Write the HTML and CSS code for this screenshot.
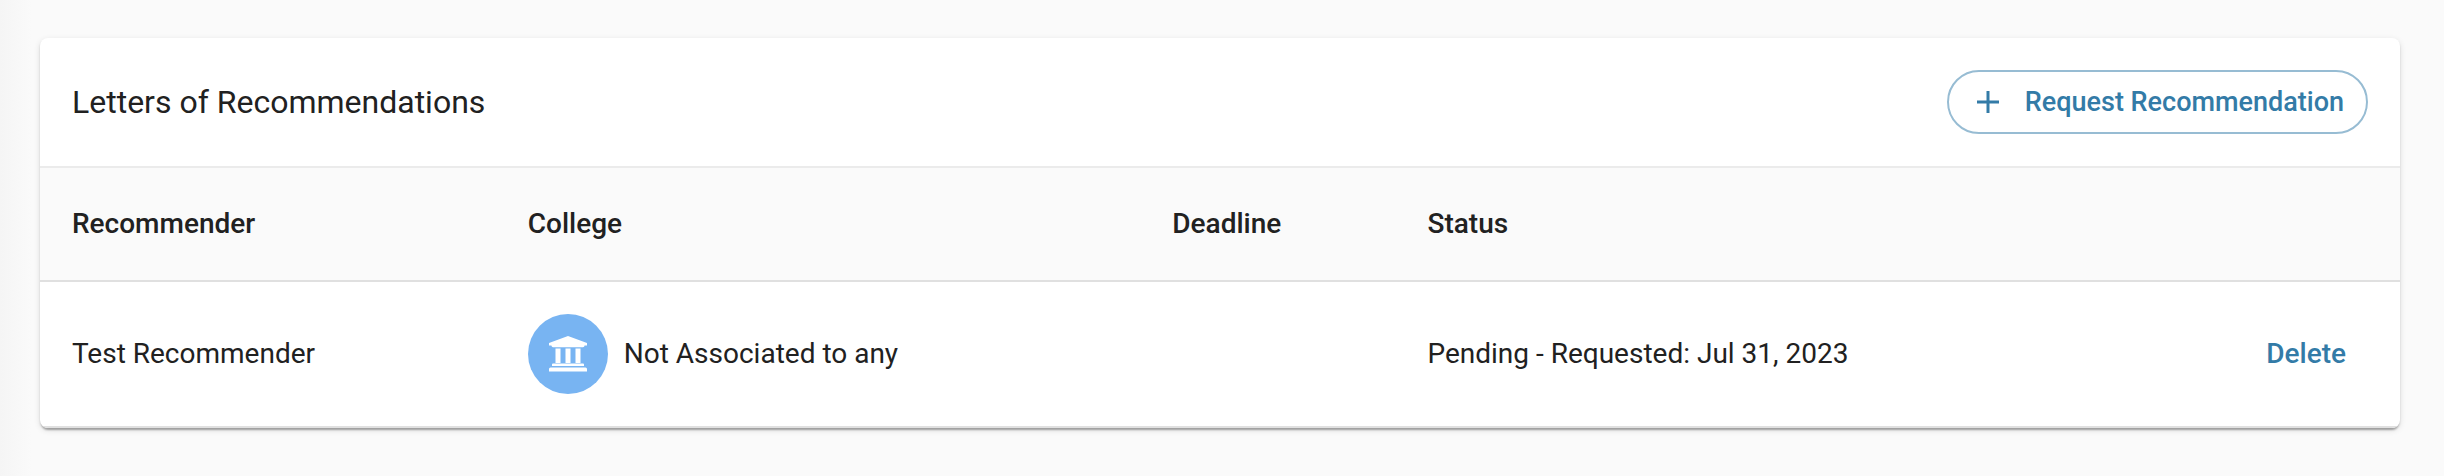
FILE: index.html
```html
<!DOCTYPE html>
<html lang="en">
<head>
    <meta charset="UTF-8">
    <meta name="viewport" content="width=device-width, initial-scale=1.0">
    <title>Letters of Recommendations</title>
    <link rel="stylesheet" href="styles.css">
</head>
<body>
    <main class="card">
        <div class="card-header">
            <h1>Letters of Recommendations</h1>
            <button type="button" class="btn btn-outline">
                <svg class="plus" viewBox="0 0 22 22" aria-hidden="true">
                    <path d="M9.500 0h3v9.500H22v3h-9.500V22h-3v-9.500H0v-3h9.500z"/>
                </svg>
                Request Recommendation
            </button>
        </div>
        <table>
            <thead>
                <tr>
                    <th class="col-recommender">Recommender</th>
                    <th class="col-college">College</th>
                    <th class="col-deadline">Deadline</th>
                    <th>Status</th>
                    <th class="col-action"></th>
                </tr>
            </thead>
            <tbody>
                <tr>
                    <td>Test Recommender</td>
                    <td>
                        <div class="college">
                            <span class="avatar">
                                <svg viewBox="0 0 38 36" aria-hidden="true">
                                    <path d="M19 0L38 7v2.500h-2.400q-.2 1.800-1.600 1.800H4q-1.400 0-1.600-1.800H0V7z"/>
                                    <path d="M6.500 12.500h5V27h-5zM16.500 12.500h5V27h-5zM26.500 12.500h5V27h-5z"/>
                                    <path d="M4 27.500h30q1 0 1 1V30H3v-1.500q0-1 1-1zM1.500 31.500h35q1.500 0 1.500 1.500v2.500H0V33q0-1.500 1.500-1.500z"/>
                                </svg>
                            </span>
                            Not Associated to any
                        </div>
                    </td>
                    <td></td>
                    <td>Pending - Requested: Jul 31, 2023</td>
                    <td class="action"><button type="button" class="btn btn-text">Delete</button></td>
                </tr>
            </tbody>
        </table>
    </main>
</body>
</html>
```
FILE: styles.css
```css
body {
    margin: 0;
    padding: 38px 44px 48px 40px;
    font-family: Roboto, sans-serif;
    font-size: 28px;
    line-height: 40px;
    color: #212121;
    background: #fafafa linear-gradient(to right, #f5f5f5, #fafafa) no-repeat;
    background-size: 32px 100%;
}
.card {
    background-color: #fff;
    border-radius: 8px;
    box-shadow: 0 4px 2px -2px rgba(0, 0, 0, 0.2), 0 2px 2px rgba(0, 0, 0, 0.14), 0 2px 6px rgba(0, 0, 0, 0.12);
    overflow: hidden;
}
.card-header {
    display: flex;
    align-items: center;
    justify-content: space-between;
    padding: 32px;
    border-bottom: 2px solid #ebebeb;
}
h1 {
    margin: 0;
    font-size: 32px;
    font-weight: 400;
}
.btn {
    font-family: inherit;
    font-weight: 500;
    line-height: 40px;
    color: #337ba7;
    background: none;
    border: none;
    cursor: pointer;
}
.btn-outline {
    display: flex;
    align-items: center;
    gap: 26px;
    padding: 10px 22px 10px 28px;
    font-size: 27px;
    border: 2px solid #97bcd3;
    border-radius: 32px;
}
.plus {
    width: 22px;
    height: 22px;
    fill: currentColor;
}
.btn-text {
    padding: 0 22px;
    font-size: 28px;
}
table {
    width: 100%;
    table-layout: fixed;
    border-collapse: separate;
    border-spacing: 0;
}
th, td {
    padding: 32px;
    text-align: left;
    border-bottom: 2px solid #e0e0e0;
}
th {
    padding: 36px 32px;
    font-weight: 500;
    background-color: #fafafa;
}
.col-recommender {
    width: 16.6%;
}
.col-college {
    width: 24.6%;
}
.col-deadline {
    width: 8.1%;
}
.col-action {
    width: 10%;
}
.college {
    display: flex;
    align-items: center;
    gap: 16px;
}
.avatar {
    display: flex;
    align-items: center;
    justify-content: center;
    width: 80px;
    height: 80px;
    border-radius: 50%;
    background-color: #78b4f2;
}
.avatar svg {
    width: 38px;
    height: 36px;
    fill: #fff;
}
td.action {
    text-align: right;
}
```
